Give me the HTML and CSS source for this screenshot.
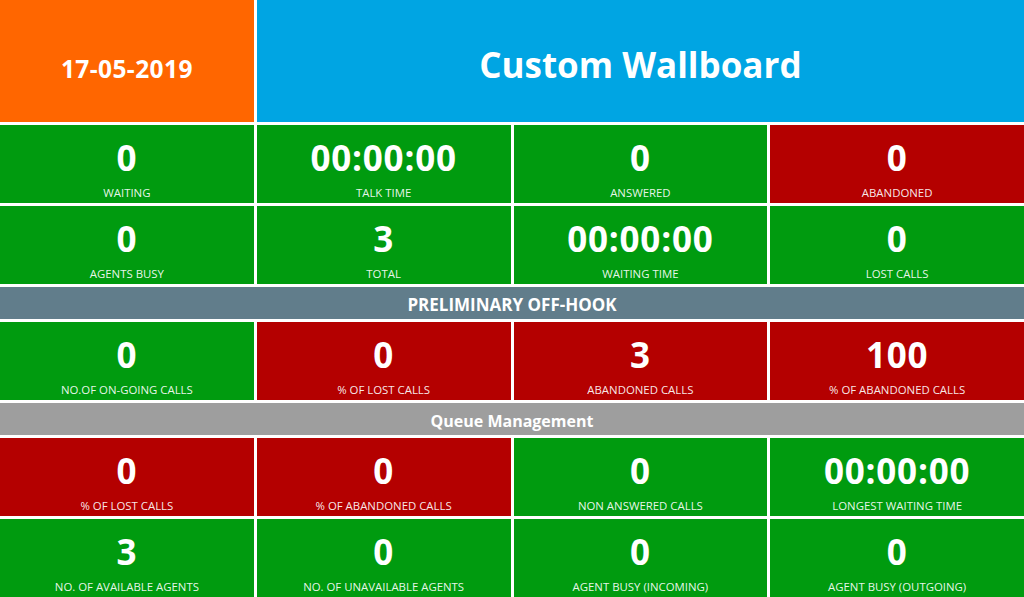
FILE: index.html
```html
<!DOCTYPE html>
<html>
<head>
<meta charset="utf-8">
<link rel="stylesheet" href="styles.css">
</head>
<body>
<div class="board">
  <div class="date">17-05-2019</div>
  <div class="title">Custom Wallboard</div>

  <div class="cell green"><div class="num">0</div><div class="lbl">WAITING</div></div>
  <div class="cell green"><div class="num">00:00:00</div><div class="lbl">TALK TIME</div></div>
  <div class="cell green"><div class="num">0</div><div class="lbl">ANSWERED</div></div>
  <div class="cell red"><div class="num">0</div><div class="lbl">ABANDONED</div></div>

  <div class="cell green"><div class="num">0</div><div class="lbl">AGENTS BUSY</div></div>
  <div class="cell green"><div class="num">3</div><div class="lbl">TOTAL</div></div>
  <div class="cell green"><div class="num">00:00:00</div><div class="lbl">WAITING TIME</div></div>
  <div class="cell green"><div class="num">0</div><div class="lbl">LOST CALLS</div></div>

  <div class="banner slate">PRELIMINARY OFF-HOOK</div>

  <div class="cell green"><div class="num">0</div><div class="lbl">NO.OF ON-GOING CALLS</div></div>
  <div class="cell red"><div class="num">0</div><div class="lbl">% OF LOST CALLS</div></div>
  <div class="cell red"><div class="num">3</div><div class="lbl">ABANDONED CALLS</div></div>
  <div class="cell red"><div class="num">100</div><div class="lbl">% OF ABANDONED CALLS</div></div>

  <div class="banner grey">Queue Management</div>

  <div class="cell red"><div class="num">0</div><div class="lbl">% OF LOST CALLS</div></div>
  <div class="cell red"><div class="num">0</div><div class="lbl">% OF ABANDONED CALLS</div></div>
  <div class="cell green"><div class="num">0</div><div class="lbl">NON ANSWERED CALLS</div></div>
  <div class="cell green"><div class="num">00:00:00</div><div class="lbl">LONGEST WAITING TIME</div></div>

  <div class="cell green"><div class="num">3</div><div class="lbl">NO. OF AVAILABLE AGENTS</div></div>
  <div class="cell green"><div class="num">0</div><div class="lbl">NO. OF UNAVAILABLE AGENTS</div></div>
  <div class="cell green"><div class="num">0</div><div class="lbl">AGENT BUSY (INCOMING)</div></div>
  <div class="cell green"><div class="num">0</div><div class="lbl">AGENT BUSY (OUTGOING)</div></div>
</div>
</body>
</html>
```
FILE: styles.css
```css
html, body {
  margin: 0;
  padding: 0;
  background: #ffffff;
}
body {
  font-family: "Open Sans", "Noto Sans", sans-serif;
  color: #ffffff;
  width: 1024px;
  height: 597px;
  overflow: hidden;
}
.board {
  display: grid;
  grid-template-columns: repeat(4, 1fr);
  grid-template-rows: 122px 78px 78px 32px 78px 32px 78px 78px;
  gap: 3px;
  width: 1024px;
}
.date {
  background: #ff6600;
  display: flex;
  align-items: center;
  justify-content: center;
  font-weight: 700;
  font-size: 24.5px;
  letter-spacing: 0.4px;
  padding-top: 14px;
  box-sizing: border-box;
}
.title {
  grid-column: span 3;
  background: #00a5e3;
  display: flex;
  align-items: center;
  justify-content: center;
  font-weight: 700;
  font-size: 35px;
  padding-top: 6px;
  box-sizing: border-box;
}
.cell {
  display: flex;
  flex-direction: column;
  align-items: center;
  padding-top: 13px;
  box-sizing: border-box;
}
.green { background: #009b0f; }
.red { background: #b40000; }
.num {
  font-weight: 700;
  font-size: 35px;
  letter-spacing: 0.8px;
  line-height: 40px;
}
.lbl {
  margin-top: 7px;
  font-size: 11.4px;
  line-height: 16px;
  color: rgba(255,255,255,0.92);
}
.banner {
  grid-column: span 4;
  display: flex;
  align-items: center;
  justify-content: center;
  font-weight: 700;
  padding-top: 3px;
  box-sizing: border-box;
}
.slate {
  background: #617d8b;
  font-size: 17px;
}
.grey {
  background: #9e9e9e;
  font-size: 16px;
}
```
